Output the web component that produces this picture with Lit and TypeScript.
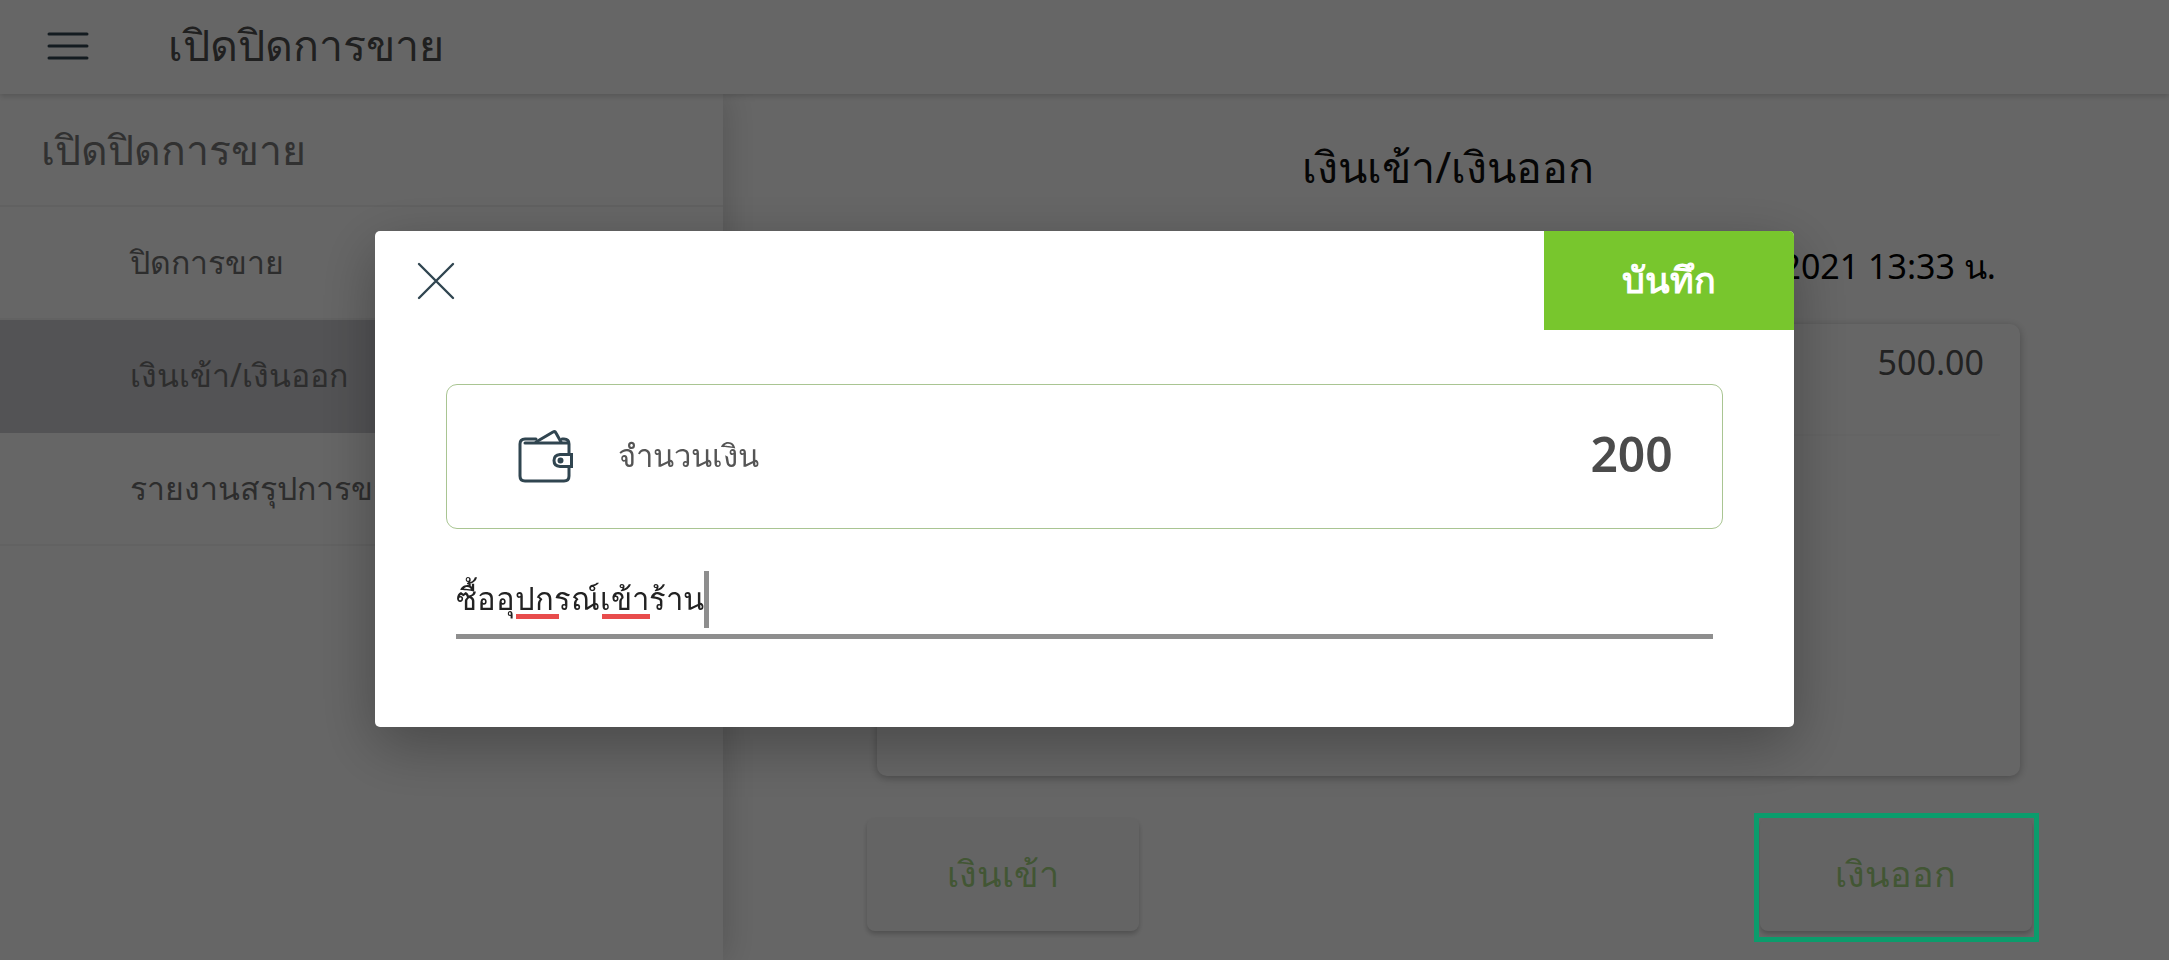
import { LitElement, html, css } from "lit";
import { customElement, state } from "lit/decorators.js";
import { classMap } from "lit/directives/class-map.js";

@customElement("app-root")
export class AppRoot extends LitElement {
  @state() private selected = 1;
  @state() private amount = "200";
  @state() private note = "ซื้ออุปกรณ์เข้าร้าน";

  private items = ["ปิดการขาย", "เงินเข้า/เงินออก", "รายงานสรุปการขาย"];

  static styles = css`
    :host {
      display: flex;
      flex-direction: column;
      min-height: 100vh;
      overflow: hidden;
      background: #fff;
      color: #555;
      font-family: "Noto Sans", "Liberation Sans", sans-serif;
      font-size: 32px;
    }
    * {
      box-sizing: border-box;
    }
    h1,
    h2,
    p,
    ul {
      margin: 0;
      padding: 0;
      font-weight: 400;
    }
    button,
    input {
      font: inherit;
      color: inherit;
      border: 0;
      background: none;
      padding: 0;
      border-radius: 0;
      outline: none;
    }
    svg {
      display: block;
      fill: none;
      stroke: #304550;
      stroke-linecap: round;
      stroke-linejoin: round;
    }
    .topbar {
      position: relative;
      z-index: 1;
      display: flex;
      align-items: center;
      gap: 78px;
      height: 94px;
      padding: 0 46px 3px;
      background: #fff;
      box-shadow: 0 2px 6px rgba(0, 0, 0, 0.18);
    }
    .topbar h1 {
      font-size: 43px;
      color: #505050;
    }
    .body {
      flex: 1;
      display: grid;
      grid-template-columns: 1fr 2fr;
    }
    .side {
      box-shadow: 4px 0 30px rgba(0, 0, 0, 0.16);
    }
    .side h2 {
      display: flex;
      align-items: center;
      height: 113px;
      padding: 2px 41px 0;
      font-size: 41px;
      color: #7c7c7c;
      border-bottom: 2px solid #f2f2f2;
    }
    .side ul {
      list-style: none;
    }
    .item {
      display: flex;
      align-items: center;
      width: 100%;
      height: 113px;
      padding: 0 130px;
      text-decoration: none;
      white-space: nowrap;
      color: #727272;
      border-bottom: 2px solid #f4f4f4;
    }
    .item.on {
      background: #cfcfd4;
      border-color: #cfcfd4;
    }
    .main {
      display: flex;
      flex-direction: column;
      padding: 36px 9.2% 0 9.5%;
    }
    .main h2 {
      font-size: 43px;
      line-height: 74px;
      text-align: center;
      color: #111;
    }
    .date {
      margin-top: 32px;
      padding-right: 40px;
      font-size: 34px;
      line-height: 60px;
      text-align: right;
      color: #000;
    }
    .card {
      height: 452px;
      margin: 28px 16px 42px 17px;
      padding: 0 20px;
      border-radius: 10px;
      box-shadow: 0 2px 8px rgba(0, 0, 0, 0.28);
    }
    .total {
      padding: 8px 16px 0;
      height: 112px;
      border-bottom: 2px solid #fafafa;
      font-size: 34px;
      line-height: 60px;
      text-align: right;
    }
    .actions {
      display: flex;
      justify-content: space-between;
      padding: 0 4px 0 7px;
    }
    .slot {
      position: relative;
    }
    .action {
      width: 272px;
      height: 113px;
      border-radius: 8px;
      background: #fbfbfb;
      box-shadow: 0 3px 5px rgba(0, 0, 0, 0.22);
      font-size: 36px;
      color: #a6d682;
    }
    .ring {
      position: absolute;
      z-index: 4;
      inset: -5px -7px -11px -6px;
      border: 5px solid #0b9c6c;
      pointer-events: none;
    }
    .scrim {
      position: fixed;
      z-index: 2;
      inset: 0;
      display: grid;
      place-items: center;
      padding-bottom: 2px;
      background: rgba(0, 0, 0, 0.6);
    }
    .modal {
      width: 65.4%;
      border-radius: 5px;
      background: #fff;
      box-shadow: 0 18px 60px rgba(0, 0, 0, 0.3);
      overflow: hidden;
    }
    .head {
      display: flex;
      justify-content: space-between;
      align-items: center;
      padding-left: 40px;
    }
    .save {
      width: 250px;
      height: 99px;
      background: #78c62d;
      color: #fff;
      font-size: 36px;
      font-weight: 600;
    }
    .fields {
      display: flex;
      flex-direction: column;
      gap: 31px;
      padding: 54px 71px 88px;
    }
    .amount {
      display: flex;
      align-items: center;
      height: 145px;
      padding: 0 49px 2px 69px;
      border: 1px solid #a9c592;
      border-radius: 11px;
    }
    .amount label {
      margin-left: 42px;
      font-size: 31px;
    }
    .amount input {
      flex: 1;
      min-width: 0;
      padding-bottom: 4px;
      text-align: right;
      font-size: 48px;
      font-weight: 600;
      color: #4b4b4b;
    }
    .note {
      position: relative;
      margin: 0 10px;
    }
    .note input {
      display: block;
      width: 100%;
      height: 79px;
      padding-top: 4px;
      border-bottom: 5px solid #8e8e8e;
      font-size: 31px;
      color: #222;
    }
    .caret,
    .mark {
      position: absolute;
      pointer-events: none;
    }
    .caret {
      left: 248px;
      top: 11px;
      width: 5px;
      height: 57px;
      background: #8e8e8e;
    }
    .mark {
      top: 54px;
      height: 5px;
      background: #e84c4c;
    }
    .m1 {
      left: 60px;
      width: 43px;
    }
    .m2 {
      left: 146px;
      width: 48px;
    }
  `;

  render() {
    return html`
      <header class="topbar">
        <button aria-label="เมนู">
          <svg width="44" height="36" viewBox="0 0 44 36" stroke-width="3">
            <path d="M3 6H41M3 18H41M3 30H41" />
          </svg>
        </button>
        <h1>เปิดปิดการขาย</h1>
      </header>
      <div class="body">
        <nav class="side">
          <h2>เปิดปิดการขาย</h2>
          <ul>
            ${this.items.map(
              (t, i) => html`<li>
                <a
                  href="#"
                  class=${classMap({ item: true, on: i === this.selected })}
                  @click=${(e: Event) => {
                    e.preventDefault();
                    this.selected = i;
                  }}
                  >${t}</a
                >
              </li>`
            )}
          </ul>
        </nav>
        <main class="main">
          <h2>เงินเข้า/เงินออก</h2>
          <p class="date">2021 13:33 น.</p>
          <section class="card"><p class="total">500.00</p></section>
          <div class="actions">
            <div class="slot"><button class="action">เงินเข้า</button></div>
            <div class="slot">
              <button class="action">เงินออก</button><span class="ring"></span>
            </div>
          </div>
        </main>
      </div>
      <div class="scrim">
        <form class="modal" role="dialog" @submit=${(e: Event) => e.preventDefault()}>
          <div class="head">
            <button type="button" aria-label="ปิด">
              <svg width="42" height="42" viewBox="0 0 42 42" stroke-width="2.4">
                <path d="M4 4L38 38M38 4L4 38" />
              </svg>
            </button>
            <button class="save">บันทึก</button>
          </div>
          <div class="fields">
            <div class="amount">
              <svg width="60" height="60" viewBox="0 0 60 60" stroke-width="3">
                <path d="M53 28V18Q53 13 48 13H46M20 13H9Q4 13 4 18V50Q4 55 9 55H48Q53 55 53 50V41" />
                <path d="M9 17H52" />
                <path d="M20 16L37 6Q39 5 40 7L45 16" />
                <path d="M55.500 28.500V40.500H44Q38 40 38 34.500Q38 29 44 28.500Z" stroke-linejoin="miter" />
                <circle cx="44.500" cy="34.500" r="1.500" />
              </svg>
              <label for="amount">จำนวนเงิน</label>
              <input
                id="amount"
                inputmode="numeric"
                .value=${this.amount}
                @input=${(e: any) => (this.amount = e.target.value)}
              />
            </div>
            <div class="note">
              <input
                aria-label="หมายเหตุ"
                spellcheck="false"
                .value=${this.note}
                @input=${(e: any) => (this.note = e.target.value)}
              />
              <span class="mark m1"></span>
              <span class="mark m2"></span>
              <span class="caret"></span>
            </div>
          </div>
        </form>
      </div>
    `;
  }
}
